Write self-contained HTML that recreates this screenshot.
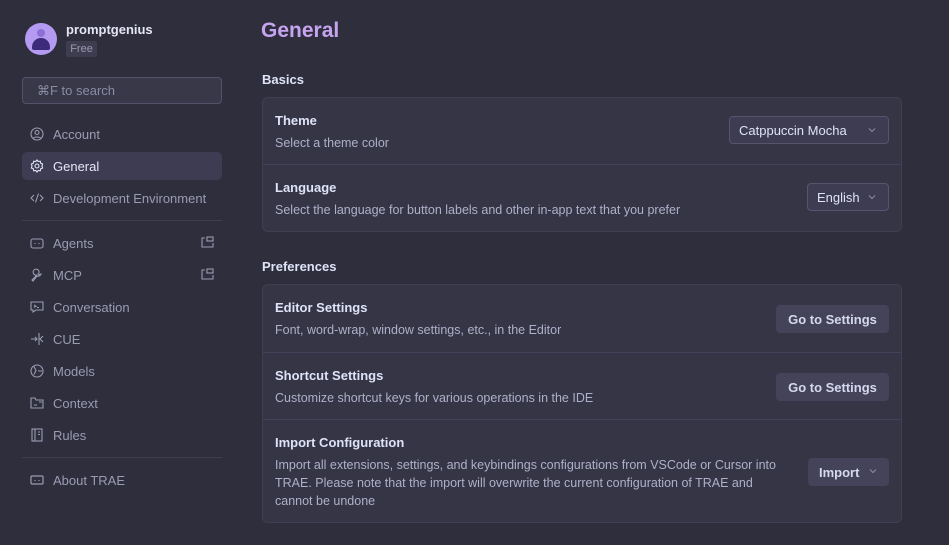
<!DOCTYPE html>
<html><head><meta charset="utf-8"><style>
*{box-sizing:border-box;margin:0;padding:0}
body{width:949px;height:545px;background:#2f2e3d;font-family:"Liberation Sans",sans-serif;color:#cdd3f0;position:relative;overflow:hidden}
.abs{position:absolute}
.nav{position:absolute;left:22px;width:200px;height:28px;display:flex;align-items:center;font-size:13px;color:#9a9cb2}
.nav svg{position:absolute;left:8px;top:7px}
.nav span{position:absolute;left:31px}
.nav.act{background:#3e3c52;border-radius:5px;color:#e4e6f6}
.ext{position:absolute;right:8px;top:8px}
.sep{position:absolute;left:22px;width:200px;height:1px;background:#3f3e50}
.card{position:absolute;left:262px;width:640px;background:#363546;border:1px solid #403f52;border-radius:6px}
.row{position:absolute;left:0;right:0;border-top:1px solid #42415a}
.t{position:absolute;left:12px;font-size:13px;font-weight:bold;color:#dfe3f8}
.d{position:absolute;left:12px;font-size:12.5px;color:#adb1c8;line-height:18px}
.btn{position:absolute;right:12px;height:28px;border-radius:4px;background:#45435a;font-size:13px;font-weight:bold;color:#d4d8f0;display:flex;align-items:center;justify-content:center}
.sel{position:absolute;right:12px;height:28px;border-radius:4px;background:#3e3c52;border:1px solid #57546e;font-size:13px;color:#dfe3f8;display:flex;align-items:center;padding-left:9px}
.chev{position:absolute;right:12px;top:10px}
h2{position:absolute;left:262px;font-size:13px;font-weight:bold;color:#dfe3f8}
</style></head><body>
<div class="abs" style="left:25px;top:23px;width:32px;height:32px;border-radius:50%;background:#b49af0;overflow:hidden">
<div class="abs" style="left:12px;top:6px;width:8px;height:8px;border-radius:50%;background:#8e6fd6"></div>
<div class="abs" style="left:7px;top:15px;width:18px;height:12px;border-radius:9px 9px 2px 2px;background:#3c2a7a"></div></div>
<div class="abs" style="left:66px;top:22px;font-size:13px;font-weight:bold;color:#e4e6f6">promptgenius</div>
<div class="abs" style="left:66px;top:41px;width:31px;height:16px;background:#3e3c4f;border-radius:2px;font-size:11px;color:#9a9cb2;text-align:center;line-height:16px">Free</div>
<div class="abs" style="left:22px;top:77px;width:200px;height:27px;border:1px solid #54526a;border-radius:4px;background:#393849;font-size:13px;color:#8a8ca3;padding-left:14px;line-height:25px">⌘F to search</div>

<div class="nav" style="top:120px"><svg width="14" height="14" viewBox="0 0 14 14" fill="none" stroke="#9a9cb2" stroke-width="1.1"><circle cx="7" cy="7" r="6"/><circle cx="7" cy="5.5" r="2"/><path d="M3.2 11.5c1-2 6.6-2 7.6 0"/></svg><span>Account</span></div>
<div class="nav act" style="top:152px"><svg width="14" height="14" viewBox="0 0 14 14" fill="none" stroke="#e4e6f6" stroke-width="1.1"><circle cx="7" cy="7" r="2"/><path d="M7 1l1.3 1.5 2-.3.4 2L12.6 5 12 7l.6 2-1.9.8-.4 2-2-.3L7 13l-1.3-1.5-2 .3-.4-2L1.4 9 2 7l-.6-2 1.9-.8.4-2 2 .3z"/></svg><span>General</span></div>
<div class="nav" style="top:184px"><svg width="14" height="14" viewBox="0 0 14 14" fill="none" stroke="#9a9cb2" stroke-width="1.1"><path d="M4 4L1 7l3 3M10 4l3 3-3 3M8.5 2.5l-3 9"/></svg><span>Development Environment</span></div>
<div class="sep" style="top:220px"></div>
<div class="nav" style="top:229px"><svg width="14" height="14" viewBox="0 0 14 14" fill="none" stroke="#9a9cb2" stroke-width="1.1"><rect x="1" y="3" width="12" height="9" rx="2"/><path d="M5 7v1M9 7v1"/></svg><span>Agents</span><svg class="ext" style="left:auto;right:8px" width="13" height="12" viewBox="0 0 13 12" fill="none" stroke="#9a9cb2" stroke-width="1.1"><path d="M4 2H1v9h11V7"/><rect x="6" y="1" width="6" height="4"/></svg></div>
<div class="nav" style="top:261px"><svg width="14" height="14" viewBox="0 0 14 14" fill="none" stroke="#9a9cb2" stroke-width="1.1"><path d="M2 12l5-5a3 3 0 1 1 2-2L8 6l1 1 2-1a3 3 0 0 1-4 2l-4 5z"/></svg><span>MCP</span><svg class="ext" style="left:auto;right:8px" width="13" height="12" viewBox="0 0 13 12" fill="none" stroke="#9a9cb2" stroke-width="1.1"><path d="M4 2H1v9h11V7"/><rect x="6" y="1" width="6" height="4"/></svg></div>
<div class="nav" style="top:293px"><svg width="14" height="14" viewBox="0 0 14 14" fill="none" stroke="#9a9cb2" stroke-width="1.1"><path d="M1 2h12v8H6l-3 2v-2H1z"/><path d="M4 5l2 1.2L4 7.4M7 7.5h2"/></svg><span>Conversation</span></div>
<div class="nav" style="top:325px"><svg width="14" height="14" viewBox="0 0 14 14" fill="none" stroke="#9a9cb2" stroke-width="1.1"><path d="M1 7h6M5 5l2 2-2 2M9 1v12M13 4l-3 3 3 3"/></svg><span>CUE</span></div>
<div class="nav" style="top:357px"><svg width="14" height="14" viewBox="0 0 14 14" fill="none" stroke="#9a9cb2" stroke-width="1.1"><circle cx="7" cy="7" r="6"/><path d="M4 2.5l2 4-2 4M8 7h4"/></svg><span>Models</span></div>
<div class="nav" style="top:389px"><svg width="14" height="14" viewBox="0 0 14 14" fill="none" stroke="#9a9cb2" stroke-width="1.1"><path d="M1 2h4l1 2h7v8H1z"/><path d="M4 9h3M9 6h3"/></svg><span>Context</span></div>
<div class="nav" style="top:421px"><svg width="14" height="14" viewBox="0 0 14 14" fill="none" stroke="#9a9cb2" stroke-width="1.1"><rect x="2" y="1" width="10" height="12"/><path d="M5 1v12M8 4h2M8 6.5h2"/></svg><span>Rules</span></div>
<div class="sep" style="top:457px"></div>
<div class="nav" style="top:466px"><svg width="14" height="14" viewBox="0 0 14 14" fill="none" stroke="#9a9cb2" stroke-width="1.2"><rect x="1" y="3" width="12" height="8" rx="1"/><path d="M5 7v1M9 7v1"/></svg><span>About TRAE</span></div>

<div class="abs" style="left:261px;top:19px;font-size:21px;font-weight:bold;color:#c6a4f0">General</div>
<h2 style="top:72px">Basics</h2>
<div class="card" style="top:97px;height:135px">
 <div class="t" style="top:15px">Theme</div><div class="d" style="top:36px">Select a theme color</div>
 <div class="sel" style="top:18px;width:160px">Catppuccin Mocha<svg class="chev" width="8" height="6" viewBox="0 0 8 6" fill="none" stroke="#8a8ca3" stroke-width="1"><path d="M1 1.5l3 3 3-3"/></svg></div>
 <div class="row" style="top:66px"></div>
 <div class="t" style="top:82px">Language</div><div class="d" style="top:103px">Select the language for button labels and other in-app text that you prefer</div>
 <div class="sel" style="top:85px;width:82px">English<svg class="chev" width="8" height="6" viewBox="0 0 8 6" fill="none" stroke="#8a8ca3" stroke-width="1"><path d="M1 1.5l3 3 3-3"/></svg></div>
</div>
<h2 style="top:259px">Preferences</h2>
<div class="card" style="top:284px;height:239px">
 <div class="t" style="top:15px">Editor Settings</div><div class="d" style="top:36px">Font, word-wrap, window settings, etc., in the Editor</div>
 <div class="btn" style="top:20px;width:113px">Go to Settings</div>
 <div class="row" style="top:67px"></div>
 <div class="t" style="top:83px">Shortcut Settings</div><div class="d" style="top:104px">Customize shortcut keys for various operations in the IDE</div>
 <div class="btn" style="top:88px;width:113px">Go to Settings</div>
 <div class="row" style="top:134px"></div>
 <div class="t" style="top:150px">Import Configuration</div><div class="d" style="top:171px;width:508px">Import all extensions, settings, and keybindings configurations from VSCode or Cursor into TRAE. Please note that the import will overwrite the current configuration of TRAE and cannot be undone</div>
 <div class="btn" style="top:173px;width:81px;justify-content:flex-start;padding-left:11px">Import<svg class="chev" width="8" height="6" viewBox="0 0 8 6" fill="none" stroke="#8a8ca3" stroke-width="1"><path d="M1 1.5l3 3 3-3"/></svg></div>
</div>
</body></html>
